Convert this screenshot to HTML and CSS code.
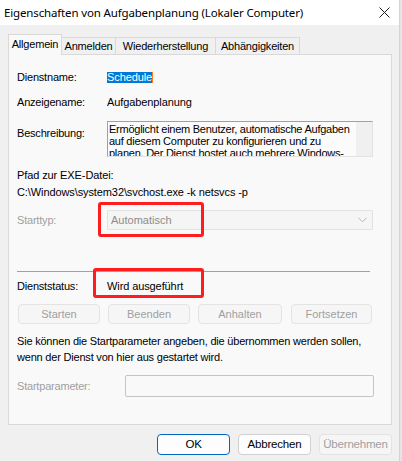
FILE: index.html
```html
<!DOCTYPE html>
<html lang="de">
<head>
<meta charset="utf-8">
<title>Eigenschaften von Aufgabenplanung</title>
<link rel="stylesheet" href="styles.css">
</head>
<body>
<div class="window">
  <div class="titlebar">
    <span class="title">Eigenschaften von Aufgabenplanung (Lokaler Computer)</span>
    <svg class="close" width="11" height="11" viewBox="0 0 11 11"><path d="M0.5 0.5L10.5 10.5M10.5 0.5L0.5 10.5" stroke="#1a1a1a" stroke-width="1"/></svg>
  </div>
  <div class="client">
    <div class="tabs">
      <div class="tab active">Allgemein</div>
      <div class="tab t2">Anmelden</div>
      <div class="tab t3">Wiederherstellung</div>
      <div class="tab t4">Abhängigkeiten</div>
    </div>
    <div class="panel">
      <div class="row r-name"><span class="label">Dienstname:</span><span class="sel">Schedule</span></div>
      <div class="row r-disp"><span class="label">Anzeigename:</span><span class="value">Aufgabenplanung</span></div>
      <div class="row r-desc">
        <span class="label">Beschreibung:</span>
        <div class="desc">
          <div class="desc-text">Ermöglicht einem Benutzer, automatische Aufgaben<br>auf diesem Computer zu konfigurieren und zu<br>planen. Der Dienst hostet auch mehrere Windows-</div>
          <div class="desc-scroll"></div>
        </div>
      </div>
      <div class="plain r-path-label">Pfad zur EXE-Datei:</div>
      <div class="plain r-path">C:\Windows\system32\svchost.exe -k netsvcs -p</div>
      <div class="row r-start">
        <span class="label disabled">Starttyp:</span>
        <div class="combo"><span>Automatisch</span><svg width="9" height="6" viewBox="0 0 9 6"><path d="M0.5 0.8L4.5 4.8L8.5 0.8" fill="none" stroke="#b4b4b4" stroke-width="1"/></svg></div>
        <div class="mark mark1"></div>
      </div>
      <div class="sep"></div>
      <div class="row r-status">
        <span class="label">Dienststatus:</span><span class="value">Wird ausgeführt</span>
        <div class="mark mark2"></div>
      </div>
      <div class="svc-buttons">
        <div class="btn dis b1">Starten</div>
        <div class="btn dis b2">Beenden</div>
        <div class="btn dis b3">Anhalten</div>
        <div class="btn dis b4">Fortsetzen</div>
      </div>
      <p class="hint">Sie können die Startparameter angeben, die übernommen werden sollen,<br>wenn der Dienst von hier aus gestartet wird.</p>
      <div class="row r-param"><span class="label param-label disabled">Startparameter:</span><div class="input"></div></div>
    </div>
    <div class="footer">
      <div class="btn primary">OK</div>
      <div class="btn">Abbrechen</div>
      <div class="btn dis">Übernehmen</div>
    </div>
  </div>
</div>
</body>
</html>
```

FILE: styles.css
```css
html, body {
  margin: 0;
  padding: 0;
}
body {
  background: #e6e4ea;
  font-family: "Liberation Sans", Arial, sans-serif;
  font-size: 11px;
  color: #000;
  width: 402px;
  height: 461px;
  overflow: hidden;
}
.window {
  width: 399px;
  height: 461px;
  background: #f0f0f0;
  border-right: 1px solid #d4d4d4;
}
.titlebar {
  height: 25px;
  background: #ffffff;
  display: flex;
  align-items: center;
  justify-content: space-between;
  padding: 0 9px 0 4px;
}
.title {
  font-family: "Noto Sans", "Open Sans", sans-serif;
  font-size: 11.5px;
  letter-spacing: -0.15px;
  line-height: 16px;
  color: #000;
  margin-top: 1px;
}
.close {
  display: block;
}
.client {
  padding: 9px 0 0 8px;
}
.tabs {
  display: flex;
  align-items: flex-end;
  height: 20px;
  position: relative;
  z-index: 2;
}
.tab {
  height: 17px;
  box-sizing: border-box;
  border: 1px solid #d9d9d9;
  border-bottom: none;
  border-left: none;
  background: #f0f0f0;
  line-height: 16px;
  text-align: center;
  color: #000;
  letter-spacing: -0.2px;
}
.tab.active {
  height: 21px;
  margin-bottom: -1px;
  border-left: 1px solid #d9d9d9;
  background: #f9f9f9;
  width: 54px;
  line-height: 18px;
}
.tab.t2 { width: 54px; }
.tab.t3 { width: 100px; }
.tab.t4 { width: 84px; }
.panel {
  width: 384px;
  height: 371px;
  box-sizing: border-box;
  border: 1px solid #d9d9d9;
  background: #f9f9f9;
  padding: 15px 0 0 8px;
  position: relative;
  z-index: 1;
}
.row {
  display: flex;
  position: relative;
}
.label {
  width: 90px;
  flex: none;
  line-height: 14px;
  letter-spacing: -0.2px;
}
.value, .plain {
  line-height: 14px;
  letter-spacing: -0.1px;
}
.disabled {
  color: #a0a0a0;
}
.r-name { height: 14px; }
.sel {
  background: #0078d7;
  color: #fff;
  line-height: 11px;
  height: 11px;
  margin-top: 2px;
  border-right: 1px solid #ff7a1a;
  letter-spacing: -0.1px;
}
.r-disp { margin-top: 11px; height: 14px; }
.r-desc { margin-top: 12px; height: 36px; }
.r-desc .label { padding-top: 5px; }
.desc {
  width: 266px;
  height: 36px;
  box-sizing: border-box;
  border: 1px solid #e3e3e3;
  border-top-color: #a0a0a0;
  border-left-color: #a0a0a0;
  background: #fbfbfb;
  display: flex;
  overflow: hidden;
}
.desc-text {
  flex: 1;
  padding: 1px 0 0 1px;
  line-height: 12px;
  white-space: nowrap;
  overflow: hidden;
  letter-spacing: -0.25px;
}
.desc-scroll {
  width: 16px;
  background: #f0f0f0;
}
.r-path-label { margin-top: 11px; }
.r-path { margin-top: 3px; }
.r-start { margin-top: 11px; height: 20px; }
.r-start .label { line-height: 20px; }
.combo {
  width: 266px;
  height: 20px;
  box-sizing: border-box;
  border: 1px solid #e2e2e2;
  border-radius: 2px;
  background: #f5f5f5;
  color: #8c8c8c;
  display: flex;
  align-items: center;
  justify-content: space-between;
  padding: 0 5px 0 3px;
  line-height: 18px;
}
.mark {
  position: absolute;
  box-sizing: border-box;
  border: 3px solid #ff1c1c;
  border-radius: 3px;
  pointer-events: none;
}
.mark1 { left: 81px; top: -8px; width: 106px; height: 35px; }
.mark2 { left: 76px; top: -11px; width: 111px; height: 30px; }
.sep {
  margin-top: 41px;
  width: 353px;
  height: 1px;
  background: #a0a0a0;
}
.r-status { margin-top: 7px; height: 14px; }
.svc-buttons {
  margin-top: 11px;
  display: flex;
  height: 20px;
}
.btn {
  height: 20px;
  box-sizing: border-box;
  border: 1px solid #d0d0d0;
  border-radius: 4px;
  background: #fdfdfd;
  text-align: center;
  line-height: 18px;
  color: #000;
}
.btn.dis {
  border-color: #e3e3e3;
  background: #f6f6f6;
  color: #a0a0a0;
}
.svc-buttons .b1 { width: 82px; margin-left: 1px; }
.svc-buttons .b2 { width: 82px; margin-left: 8px; }
.svc-buttons .b3 { width: 84px; margin-left: 8px; }
.svc-buttons .b4 { width: 81px; margin-left: 9px; }
.hint {
  margin: 9px 0 0 0;
  line-height: 16px;
  letter-spacing: -0.2px;
}
.r-param { margin-top: 10px; height: 22px; }
.param-label { width: 108px; line-height: 22px; }
.input {
  width: 249px;
  height: 22px;
  box-sizing: border-box;
  border: 1px solid #c4c4c4;
  border-radius: 2px;
  background: #f9f9f9;
}
.footer {
  margin-top: 9px;
  width: 384px;
  display: flex;
  justify-content: flex-end;
  gap: 8px;
}
.footer .btn {
  width: 73px;
  height: 21px;
  line-height: 19px;
  font-size: 11.5px;
  letter-spacing: -0.2px;
}
.footer .btn.primary {
  border-color: #0067c0;
}
```
